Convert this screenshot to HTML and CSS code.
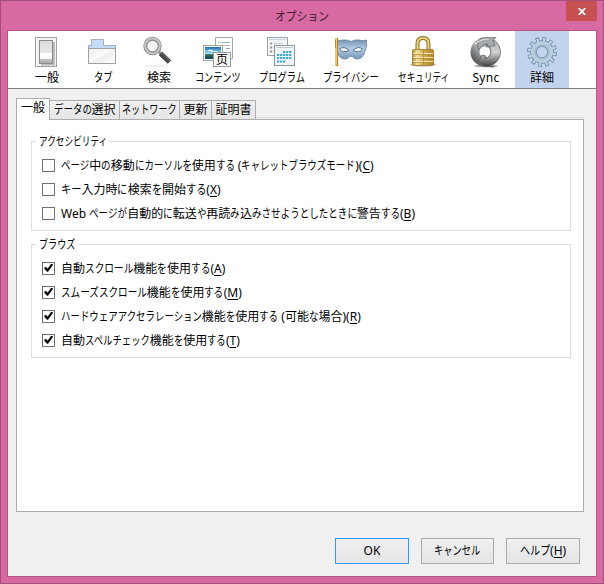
FILE: index.html
```html
<!DOCTYPE html>
<html lang="ja">
<head>
<meta charset="utf-8">
<title>オプション</title>
<link rel="stylesheet" href="styles.css">
</head>
<body>
<div class="window">
  <header class="titlebar">
    <h1><span class="k" style="--n:5;--s:.9">オプション</span></h1>
    <button class="close" aria-label="閉じる"><svg width="8" height="7" viewBox="0 0 8 7"><path d="M.7 0 7.3 7M7.3 0 .7 7" stroke="#fff" stroke-width="1.8"/></svg></button>
  </header>
  <main class="client">
    <nav class="toolbar">
      <div class="item">
        <svg class="icon" viewBox="0 0 32 32"><defs><linearGradient id="sw" x2="0" y2="1"><stop stop-color="#ddd"/><stop offset=".53" stop-color="#e6e6e6"/><stop offset=".54" stop-color="#fff"/><stop offset=".8" stop-color="#f8f8f8"/><stop offset=".82" stop-color="#c2c2c2"/><stop offset="1" stop-color="#aaa"/></linearGradient></defs><rect x="4.500" y="1.500" width="21" height="29" fill="#f5f5f5" stroke="#a0a0a0"/><path d="M10 28.500h13V6" fill="none" stroke="#bbb" stroke-width="2"/><rect x="8.500" y="4.500" width="13" height="23" fill="url(#sw)" stroke="#8b8b8b"/></svg>
        <span class="label">一般</span>
      </div>
      <div class="item">
        <svg class="icon" viewBox="0 0 32 32"><defs><linearGradient id="tb" x2="1" y2="1"><stop stop-color="#eee"/><stop offset=".45" stop-color="#fafafa"/><stop offset=".55" stop-color="#eee"/><stop offset="1" stop-color="#fff"/></linearGradient></defs><path d="M1.500 12V9.500h3v-6h12v6h12V12" fill="#c4dcf8" stroke="#a5adb8"/><rect x="1.500" y="12.500" width="27" height="15" fill="url(#tb)" stroke="#a0a0a0"/></svg>
        <span class="label"><span class="k" style="--n:2;--s:.78">タブ</span></span>
      </div>
      <div class="item">
        <svg class="icon" viewBox="0 0 32 32"><ellipse cx="14" cy="30" rx="12" ry="1" fill="#eee"/><path d="m15 15 3 3" stroke="#999" stroke-width="3"/><path d="m17.500 17.500 9 8.500" stroke="#444" stroke-width="5"/><path d="m18.500 17 8.500 8" stroke="#777" stroke-width="1"/><circle cx="9.500" cy="10" r="7.200" fill="#f6f6f6" stroke="#8b8b8b" stroke-width="4"/><circle cx="9.500" cy="10" r="7.400" fill="none" stroke="#c6c6c6" stroke-width="2"/></svg>
        <span class="label">検索</span>
      </div>
      <div class="item" style="width:60px">
        <svg class="icon" viewBox="0 0 32 32"><defs><linearGradient id="sky" x2="0" y2="1"><stop stop-color="#1a6dad"/><stop offset=".55" stop-color="#9edff7"/><stop offset=".65" stop-color="#33664a"/><stop offset="1" stop-color="#123f5f"/></linearGradient></defs><rect x="13.500" y="1.500" width="17" height="21" fill="#fff" stroke="#a0a5a8"/><path d="M16 6.500h3M16 9.500h12" stroke="#bbb"/><path d="M20 6.500h8M24 12.500h4" stroke="#8bb4cc"/><rect x="1.500" y="9.500" width="19" height="15" fill="#fff" stroke="#a0a5a8"/><path d="M3 11h16v12H3z" fill="url(#sky)"/><path d="M5 15q3-3 7 0 2-1 4 1z" fill="#eafaff"/><rect x="11.500" y="16.500" width="17" height="14" fill="#fafafa" stroke="#999"/><text x="20" y="28" class="glyph">页</text></svg>
        <span class="label"><span class="k" style="--n:5;--s:.76">コンテンツ</span></span>
      </div>
      <div class="item" style="width:63px">
        <svg class="icon" viewBox="0 0 32 32"><rect x="1.500" y="1.500" width="20" height="18" fill="#f2f4f6" stroke="#9da4a9"/><path d="M3 3.500h17" stroke="#d0d5da"/><path d="M4 7.500h2M4 11.500h2M4 15.500h2" stroke="#999" stroke-width="2"/><path d="M7 7.500h10M7 11.500h3M7 15.500h3" stroke="#c8cdd2"/><rect x="8.500" y="9.500" width="20" height="20" fill="#f1f6fa" stroke="#8c979f"/><path d="M10 11.500h17" stroke="#c3cbd1"/><path d="M17 16h9M11 19h15M11 22h15M11 25.500h9" stroke="#42a9cf" stroke-width="2" stroke-dasharray="2.300 .7"/></svg>
        <span class="label"><span class="k" style="--n:5;--s:.77">プログラム</span></span>
      </div>
      <div class="item" style="width:72px;margin-right:1px">
        <svg class="icon" viewBox="0 0 32 32"><defs><linearGradient id="mk" x2="0" y2="1"><stop stop-color="#7593b3"/><stop offset=".45" stop-color="#b1cbe5"/><stop offset="1" stop-color="#7897b8"/></linearGradient></defs><path d="M0 4q4 1.500 8 0 4.500-.5 8 1.500 3.500-2 8-1.500 4 1.500 8 0 0 7-2.500 12.500Q27.500 23 22 23q-2.500 0-4-2-2-1.800-4 0-1.500 2-4 2-5.500 0-7.500-6.500Q0 11 0 4z" fill="url(#mk)" stroke="#5e7a9b" stroke-width=".8"/><path d="M4.500 13Q9 9.500 14 14.500 8 17.500 4.500 13zm23 0Q23 9.500 18 14.500q6 3 9.500-1.500z" fill="#fff" stroke="#526f92"/><path d="M1.800 2v28" stroke="#b9801d" stroke-width="2.500"/><path d="M1.500 2v27" stroke="#ebcb74"/></svg>
        <span class="label"><span class="k" style="--n:6;--s:.78">プライバシー</span></span>
      </div>
      <div class="item" style="width:67px">
        <svg class="icon" viewBox="0 0 32 32"><defs><linearGradient id="lk"><stop stop-color="#b58b2d"/><stop offset=".2" stop-color="#f2e19c"/><stop offset=".5" stop-color="#d2b053"/><stop offset="1" stop-color="#ad8128"/></linearGradient></defs><ellipse cx="15" cy="28.500" rx="13" ry="2" fill="#999" opacity=".7"/><path d="M9.500 14V7.500Q9.500 2 15 2t5.500 5.500V14" fill="none" stroke="#8b7129" stroke-width="4"/><path d="M9.500 14V7.500Q9.500 2 15 2t5.500 5.500V14" fill="none" stroke="#e6d27e" stroke-width="2"/><rect x="4.500" y="13.500" width="21" height="16" rx="1" fill="url(#lk)" stroke="#a98639"/><path d="M5 17.500h20M5 21.500h20M5 25.500h20" stroke="#f8e8b4"/><path d="M5 18.500h20M5 22.500h20M5 26.500h20M15.500 14v15" stroke="#a57e29" stroke-width=".6"/></svg>
        <span class="label"><span class="k" style="--n:6;--s:.72">セキュリティ</span></span>
      </div>
      <div class="item">
        <svg class="icon" viewBox="0 0 32 32"><defs><linearGradient id="sy1" x1="0" y1="1" x2="1" y2="0"><stop stop-color="#55585b"/><stop offset=".5" stop-color="#b5b8ba"/><stop offset="1" stop-color="#83878a"/></linearGradient><linearGradient id="sy2" x2="0" y2="1"><stop stop-color="#a8abad"/><stop offset=".5" stop-color="#d0d2d3"/><stop offset="1" stop-color="#37393b"/></linearGradient></defs><ellipse cx="16" cy="30" rx="12" ry="1.300" fill="#aaa"/><circle cx="15" cy="16" r="10" fill="none" stroke="url(#sy1)" stroke-width="9"/><path d="M17 1.700A14.300 14.300 0 0 1 19 30l5 1-11-1-4-5 3-6 4 1-1 2.500Q21 21 21 15q0-4-5-6 5-2 1-7.300z" fill="url(#sy2)" stroke="#55585b" stroke-width=".7"/><path d="m11 2 15-.5-3 3 2 5-8.500 1.500 1-3Q11 8 9 14 5 10 11 2z" fill="#a7aaac" stroke="#606366" stroke-width=".7"/><path d="M5 8q5-5 14-5" fill="none" stroke="#e3e4e5" stroke-width="1.200"/></svg>
        <span class="label sync">Sync</span>
      </div>
      <div class="item selected">
        <svg class="icon" viewBox="0 0 32 32"><g fill="none"><circle cx="16" cy="16" r="12.700" stroke="#6987a3" stroke-width="4.600" stroke-dasharray="3.600 3.050"/><circle cx="16" cy="16" r="8.500" stroke="#6987a3" stroke-width="6.500"/><circle cx="16" cy="16" r="12" stroke="#bed5e4" stroke-width="4.600" stroke-dasharray="2.100 4.183" stroke-dashoffset="-.7"/><circle cx="16" cy="16" r="8.500" stroke="#b7cfdf" stroke-width="5"/><circle cx="16" cy="16" r="7" stroke="#90aabd" stroke-width=".8"/></g></svg>
        <span class="label">詳細</span>
      </div>
    </nav>
    <div class="tabs">
      <div class="tab active">一般</div>
      <div class="tab" style="width:70px"><span class="k" style="--n:4;--s:.79">データの</span>選択</div>
      <div class="tab" style="width:60px"><span class="k" style="--n:6;--s:.76">ネットワーク</span></div>
      <div class="tab" style="width:32px">更新</div>
      <div class="tab" style="width:44px">証明書</div>
    </div>
    <section class="panel">
      <fieldset class="group access">
        <legend><span class="k" style="--n:8;--s:.72">アクセシビリティ</span></legend>
        <div class="row" style="--s:.79"><i class="box"></i><span class="text"><span class="k" style="--n:3">ページ</span>中<span class="k" style="--n:1">の</span>移動<span class="k" style="--n:6">にカーソルを</span>使用<span class="k" style="--n:2">する</span> (<span class="k" style="--n:12">キャレットブラウズモード</span>)(<u>C</u>)</span></div>
        <div class="row" style="--s:.85"><i class="box"></i><span class="text"><span class="k" style="--n:2">キー</span>入力時<span class="k" style="--n:1">に</span>検索<span class="k" style="--n:1">を</span>開始<span class="k" style="--n:2">する</span>(<u>X</u>)</span></div>
        <div class="row" style="--s:.795"><i class="box"></i><span class="text">Web <span class="k" style="--n:4">ページが</span>自動的<span class="k" style="--n:1">に</span>転送<span class="k" style="--n:1">や</span>再読<span class="k" style="--n:1">み</span>込<span class="k" style="--n:11">みさせようとしたときに</span>警告<span class="k" style="--n:2">する</span>(<u>B</u>)</span></div>
      </fieldset>
      <fieldset class="group browse">
        <legend><span class="k" style="--n:4;--s:.76">ブラウズ</span></legend>
        <div class="row" style="--s:.805"><i class="box on"></i><span class="text">自動<span class="k" style="--n:5">スクロール</span>機能<span class="k" style="--n:1">を</span>使用<span class="k" style="--n:2">する</span>(<u>A</u>)</span></div>
        <div class="row" style="--s:.8"><i class="box on"></i><span class="text"><span class="k" style="--n:9">スムーズスクロール</span>機能<span class="k" style="--n:1">を</span>使用<span class="k" style="--n:2">する</span>(<u>M</u>)</span></div>
        <div class="row" style="--s:.787"><i class="box on"></i><span class="text"><span class="k" style="--n:15">ハードウェアアクセラレーション</span>機能<span class="k" style="--n:1">を</span>使用<span class="k" style="--n:2">する</span> (可能<span class="k" style="--n:1">な</span>場合)(<u>R</u>)</span></div>
        <div class="row" style="--s:.78"><i class="box on"></i><span class="text">自動<span class="k" style="--n:7">スペルチェック</span>機能<span class="k" style="--n:1">を</span>使用<span class="k" style="--n:2">する</span>(<u>T</u>)</span></div>
      </fieldset>
    </section>
    <footer class="actions">
      <button class="btn primary">OK</button>
      <button class="btn cancel"><span class="k" style="--n:5;--s:.77">キャンセル</span></button>
      <button class="btn"><span class="k" style="--n:3;--s:.84">ヘルプ</span>(<u>H</u>)</button>
    </footer>
  </main>
</div>
</body>
</html>
```
FILE: styles.css
```css
* { box-sizing: border-box; }
body, h1 { margin: 0; }
body, button { font: 12px/16px "Noto Sans", "Noto Sans CJK JP", sans-serif; color: #000; }
.window {
  width: 604px; height: 584px; display: flex; flex-direction: column;
  background: #d769a3; border: 1px solid #a64d7c; padding: 0 6px 6px;
}
.titlebar { height: 29px; flex: none; position: relative; text-align: center; }
h1 { font-size: 12px; font-weight: 400; line-height: 31px; color: #40202f; }
.close {
  position: absolute; top: 0; right: 0; width: 31px; height: 20px; padding: 0;
  border: 0; background: #c75050; display: flex; align-items: center; justify-content: center;
}
.client { flex: 1; display: flex; flex-direction: column; background: #f0f0f0; border: 1px solid #b95487; }
.toolbar { height: 58px; flex: none; display: flex; gap: 2px; padding-left: 12px; background: #fff; border-bottom: 1px solid #808080; }
.item { width: 54px; display: flex; flex-direction: column; align-items: center; padding-top: 5px; }
.selected { background: #c2d3ee; }
.icon { width: 32px; height: 32px; display: block; flex: none; }
.glyph { font: 12px "Noto Sans CJK SC", sans-serif; text-anchor: middle; }
.label { line-height: 16px; margin-top: 2px; white-space: nowrap; }
.sync { letter-spacing: .3px; }
.k {
  display: inline-block; white-space: nowrap; transform: scaleX(var(--s)); transform-origin: 0 50%;
  margin-right: calc(var(--n) * (var(--s) - 1) * 1em);
}
.tabs {
  display: flex; align-items: flex-end; height: 30px; flex: none; margin-right: 11px; padding-left: 8px;
  background: linear-gradient(#dcdcdc, #dcdcdc) 8px 28px / 100% 1px no-repeat;
}
.tab {
  height: 19px; border: 1px solid #acacac; border-width: 1px 1px 0 0; background: linear-gradient(#f0f0f0, #e6e6e6);
  text-align: center; line-height: 18px; white-space: nowrap;
}
.tab.active { width: 34px; height: 22px; border-left-width: 1px; background: #fff; margin-bottom: -1px; z-index: 1; line-height: 18px; }
.panel { height: 393px; flex: none; margin: 0 12px 0 8px; padding: 13px 12px 0 14px; background: #fff; border: 1px solid #acacac; }
.group { margin: 0; padding: 0 0 0 10px; min-width: 0; border: 1px solid #dcdcdc; }
legend { margin-left: -6px; padding: 0 3px; height: 16px; line-height: 18px; }
.access { height: 98px; }
.browse { height: 122px; margin-top: 5px; }
.row { height: 24px; display: flex; align-items: center; gap: 6px; }
.row:first-of-type { margin-top: 5px; }
.text { white-space: pre; line-height: 16px; }
u { text-decoration-thickness: 1px; text-underline-offset: 2px; }
.box { width: 13px; height: 13px; margin-top: -2px; border: 1px solid #707070; background: #fff; flex: none; }
.on::after {
  content: ""; display: block; width: 11px; height: 11px; background: #000;
  clip-path: polygon(1.5px 4.8px, 3.2px 4.5px, 4.6px 6.2px, 8px 1.5px, 9.7px 1.5px, 9.7px 2.8px, 5px 9.2px, 4px 9.2px, 1.5px 6.4px);
}
.actions { display: flex; justify-content: flex-end; gap: 12px; padding: 26px 16px 0 0; }
.btn { width: 74px; height: 26px; padding: 0; border: 1px solid #acacac; background: linear-gradient(#f0f0f0, #e5e5e5); }
.cancel { width: 73px; }
.primary { border-color: #3399ff; }
```
